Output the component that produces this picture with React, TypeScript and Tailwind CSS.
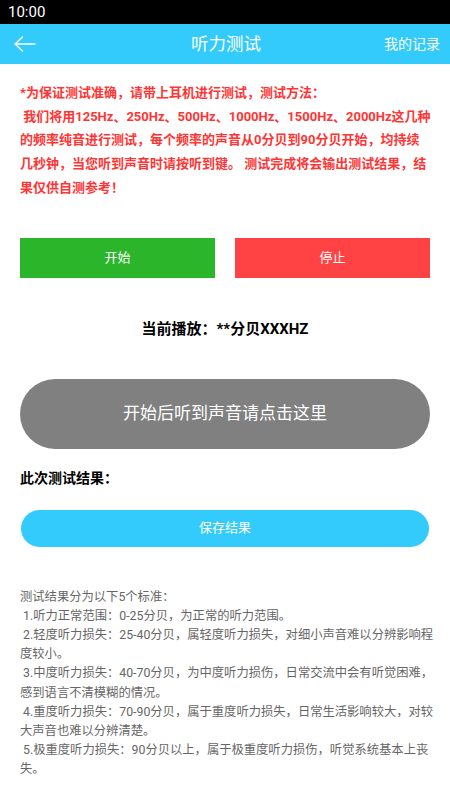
const font = { fontFamily: 'Roboto, "Noto Sans CJK SC", sans-serif' };

// visual lines as they break on the device
const notice = [
  '*为保证测试准确，请带上耳机进行测试，测试方法：',
  ' 我们将用125Hz、250Hz、500Hz、1000Hz、1500Hz、2000Hz这几种',
  '的频率纯音进行测试，每个频率的声音从0分贝到90分贝开始，均持续',
  '几秒钟，当您听到声音时请按听到键。 测试完成将会输出测试结果，结',
  '果仅供自测参考！',
];

const rules = [
  '测试结果分为以下5个标准：',
  ' 1.听力正常范围：0-25分贝，为正常的听力范围。',
  ' 2.轻度听力损失：25-40分贝，属轻度听力损失，对细小声音难以分辨影响程',
  '度较小。',
  ' 3.中度听力损失：40-70分贝，为中度听力损伤，日常交流中会有听觉困难，',
  '感到语言不清模糊的情况。',
  ' 4.重度听力损失：70-90分贝，属于重度听力损失，日常生活影响较大，对较',
  '大声音也难以分辨清楚。',
  ' 5.极重度听力损失：90分贝以上，属于极重度听力损伤，听觉系统基本上丧',
  '失。',
];

const BackArrow = () => (
  <svg width="22" height="16" viewBox="0 0 22 16" fill="none" stroke="white" strokeWidth="1.4" strokeLinecap="round">
    <path d="M1 8h20M8.5 1 1 8l7.5 7" />
  </svg>
);

export default function App() {
  return (
    <div className="w-[450px] h-[800px] bg-white overflow-hidden" style={font}>
      <div className="h-6 bg-black flex items-center px-2 text-white text-[15px]">10:00</div>
      <div className="h-10 bg-[#33cbfc] flex items-center justify-between pl-[14px] pr-[10px] text-white">
        <BackArrow />
        <div className="text-[17.5px] leading-6 ml-[32px]">听力测试</div>
        <div className="text-[14px] leading-5">我的记录</div>
      </div>

      <div className="px-5 pt-[17px] text-[13px] font-bold leading-[23.7px] text-[#ff3535] whitespace-pre">
        {notice.map((l) => (
          <div key={l}>{l}</div>
        ))}
      </div>

      <div className="flex gap-5 px-5 mt-[38px]">
        <button className="flex-1 h-10 bg-[#2bb52b] text-white text-[13px]">开始</button>
        <button className="flex-1 h-10 bg-[#ff4345] text-white text-[13px]">停止</button>
      </div>

      <div className="mt-[39px] text-center text-[15px] leading-6 font-bold text-black">当前播放：**分贝XXXHZ</div>

      <div className="px-5 mt-[38px]">
        <button className="w-full h-[70px] rounded-full bg-[#808080] text-white text-[17px]">
          开始后听到声音请点击这里
        </button>
      </div>

      <div className="px-5 mt-[19px] text-[14px] leading-5 font-bold text-black">此次测试结果：</div>

      <div className="px-[21px] mt-[22px]">
        <button className="w-full h-[37px] rounded-full bg-[#33cbfc] text-white text-[13px]">保存结果</button>
      </div>

      <div className="px-5 mt-[41px] text-[12.3px] leading-[19.2px] text-[#666] whitespace-pre">
        {rules.map((r) => (
          <div key={r}>{r}</div>
        ))}
      </div>
    </div>
  );
}
